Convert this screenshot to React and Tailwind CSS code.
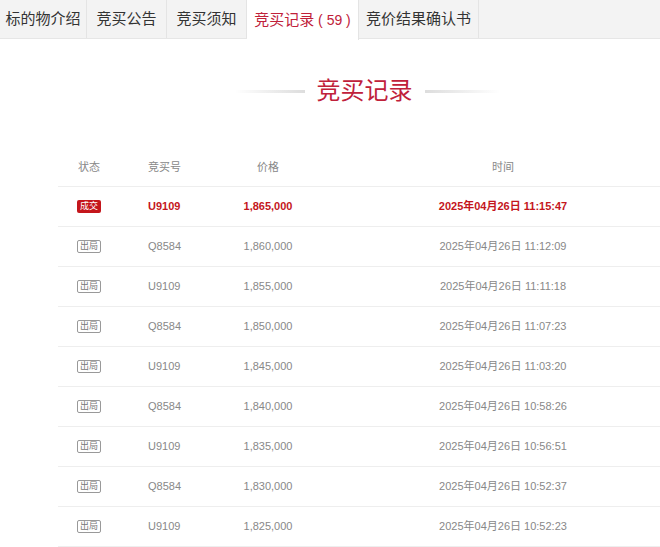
export default function App(){
const rows=[["Q8584","1,860,000","11:12:09"],["U9109","1,855,000","11:11:18"],["Q8584","1,850,000","11:07:23"],["U9109","1,845,000","11:03:20"],["Q8584","1,840,000","10:58:26"],["U9109","1,835,000","10:56:51"],["Q8584","1,830,000","10:52:37"],["U9109","1,825,000","10:52:23"]];
const tabs=["标的物介绍","竞买公告","竞买须知","竞买记录（59）","竞价结果确认书"];
const ws=["w-[87px]","w-[80px]","w-[80px]","w-[112px]","w-[120px]"];
return <div className="w-[660px] h-[547px] overflow-hidden bg-white" style={{fontFamily:'Arial,"Liberation Sans","Noto Sans CJK SC",sans-serif'}}>
<div className="flex h-[39px] bg-[#f3f3f3] border-b border-[#e6e6e6]">
{tabs.map((t,i)=><div key={i} className={`${ws[i]} flex items-center justify-center text-[15px] border-r border-[#e4e4e4] ${i===3?"bg-white text-[#c0213a] h-[40px]":"text-[#333]"}`}>{i===3?<span>竞买记录<span className="text-[14px]"> ( 59 )</span></span>:t}</div>)}
</div>
<div className="flex items-center justify-center mt-[34px] gap-3 ml-[74px]">
<div className="w-[70px] h-[3px] bg-gradient-to-r from-white to-[#ddd]"></div>
<div className="text-[24px] text-[#c0213a]">竞买记录</div>
<div className="w-[75px] h-[3px] bg-gradient-to-r from-[#ddd] to-white"></div>
</div>
<div className="ml-[58px] w-[610px] mt-[40px] text-[11px]">
<div className="flex h-[38px] items-center text-[#888] border-b border-[#eee]">
<div className="w-[62px] text-center">状态</div><div className="w-[90px] pl-[28px]">竞买号</div><div className="w-[116px] text-center">价格</div><div className="flex-1 text-center pl-[12px]">时间</div>
</div>
<div className="flex h-[40px] items-center border-b border-[#eee] text-[#c4161c] font-bold">
<div className="w-[62px] flex justify-center"><span className="bg-[#c4161c] text-white text-[9px] font-normal px-[3px] leading-[13px] rounded-[2px]">成交</span></div>
<div className="w-[90px] pl-[28px]">U9109</div><div className="w-[116px] text-center">1,865,000</div><div className="flex-1 text-center pl-[12px]">2025年04月26日 11:15:47</div>
</div>
{rows.map((r,i)=><div key={i} className="flex h-[40px] items-center border-b border-[#eee] text-[#888]">
<div className="w-[62px] flex justify-center"><span className="border border-[#999] text-[#777] text-[9px] px-[2px] leading-[11px] rounded-[2px]">出局</span></div>
<div className="w-[90px] pl-[28px]">{r[0]}</div><div className="w-[116px] text-center">{r[1]}</div><div className="flex-1 text-center pl-[12px]">2025年04月26日 {r[2]}</div>
</div>)}
</div>
</div>}
